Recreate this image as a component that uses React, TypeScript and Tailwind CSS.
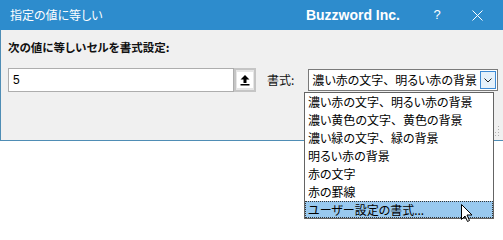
import React from 'react';

const jp = { fontFamily: '"Noto Sans CJK JP", "Noto Sans", sans-serif' };

const items = [
  '濃い赤の文字、明るい赤の背景',
  '濃い黄色の文字、黄色の背景',
  '濃い緑の文字、緑の背景',
  '明るい赤の背景',
  '赤の文字',
  '赤の罫線',
];

// keep the ideographic comma full width while the rest uses proportional kana
const Jp = ({ text }: { text: string }) => (
  <>
    {text.split('、').map((part, i) => (
      <React.Fragment key={i}>
        {i > 0 && <span className="[font-feature-settings:normal]">、</span>}
        {part}
      </React.Fragment>
    ))}
  </>
);

export default function App() {
  return (
    <div className="relative w-[503px] h-[240px] bg-white overflow-hidden" style={jp}>
      {/* title bar */}
      <div className="h-[30px] bg-[#2d8ccd] flex items-center text-white">
        <span className="pl-[10px] text-[12px] [font-feature-settings:'palt'] flex-1">指定の値に等しい</span>
        <span className="font-bold text-[14px] font-['Liberation_Sans'] mr-[30px]">Buzzword Inc.</span>
        <span className="text-[13px] font-['Liberation_Sans'] w-[14px] mr-[28px] text-center">?</span>
        <svg width="11" height="11" viewBox="0 0 11 11" className="mr-[20px]">
          <path d="M0.5 0.5 L10.5 10.5 M10.5 0.5 L0.5 10.5" stroke="white" strokeWidth="1" />
        </svg>
      </div>

      {/* dialog body */}
      <div className="h-[111px] bg-[#f0f0f0] border-l border-b border-[#4f8db5] pl-[7px] pt-[9px] relative">
        <div className="text-[11.5px] font-bold leading-[16px] text-[#111] [font-feature-settings:'palt']">
          次の値に等しいセルを書式設定:
        </div>
        <div className="flex items-center mt-[13px]">
          <div className="w-[226px] h-[24px] bg-white border border-[#adadad] flex items-center pl-[4px] text-[12px] text-black font-['Liberation_Sans']">
            5
          </div>
          <div className="w-[22px] h-[24px] border-2 border-[#c5c5c5] bg-[#e6e6e6] flex items-center justify-center">
            <div className="w-[16px] h-[16px] bg-white flex items-center justify-center">
              <svg width="10" height="12" viewBox="0 0 10 12">
                <path d="M5 1 L9.5 5.5 L6.5 5.5 L6.5 9 L3.5 9 L3.5 5.5 L0.5 5.5 Z" fill="black" />
                <rect x="0.5" y="10" width="9" height="1.5" fill="black" />
              </svg>
            </div>
          </div>
          <span className="ml-[11px] text-[12px] text-[#111] [font-feature-settings:'palt']">書式:</span>
          <div className="ml-[14px] w-[190px] h-[22px] bg-white border border-[#7a7a7a] flex items-center">
            <span className="flex-1 pl-[3px] text-[12px] text-black [font-feature-settings:'palt']">
              <Jp text="濃い赤の文字、明るい赤の背景" />
            </span>
            <div className="w-[16px] h-[18px] mr-[1px] border border-[#3d8ad4] bg-[#e5f1fb] flex items-center justify-center">
              <svg width="8" height="5" viewBox="0 0 8 5">
                <path d="M0.5 0.5 L4 4 L7.5 0.5" stroke="#222" strokeWidth="1" fill="none" />
              </svg>
            </div>
          </div>
        </div>
        {/* resize grip */}
        <svg width="6" height="12" viewBox="0 0 6 12" className="absolute right-[3px] bottom-[2px]">
          <rect x="4" y="0" width="1" height="1" fill="#b0b0b0" />
          <rect x="4" y="3" width="1" height="1" fill="#b0b0b0" />
          <rect x="4" y="6" width="1" height="1" fill="#b0b0b0" />
          <rect x="1" y="6" width="1" height="1" fill="#b0b0b0" />
          <rect x="4" y="9" width="1" height="1" fill="#b0b0b0" />
          <rect x="1" y="9" width="1" height="1" fill="#b0b0b0" />
        </svg>
      </div>

      {/* open dropdown list */}
      <div className="absolute left-[304px] top-[92px] w-[190px] h-[127px] bg-white border border-[#646464] flex flex-col">
        {items.map((t) => (
          <div key={t} className="h-[18px] leading-[18px] pl-[3px] text-[12px] text-black [font-feature-settings:'palt']">
            <Jp text={t} />
          </div>
        ))}
        <div className="h-[17px] leading-[15px] pl-[2px] text-[12px] text-black bg-[#99c9ef] border border-dotted border-[#333] [font-feature-settings:'palt']">
          ユーザー設定の書式...
        </div>
      </div>

      {/* mouse cursor */}
      <svg width="12" height="19" viewBox="0 0 12 19" className="absolute left-[461px] top-[204px]">
        <path d="M0.5 0.5 L0.5 15.5 L4 12 L6.5 17.5 L8.5 16.5 L6 11 L11 11 Z" fill="white" stroke="black" strokeWidth="1" />
      </svg>
    </div>
  );
}
